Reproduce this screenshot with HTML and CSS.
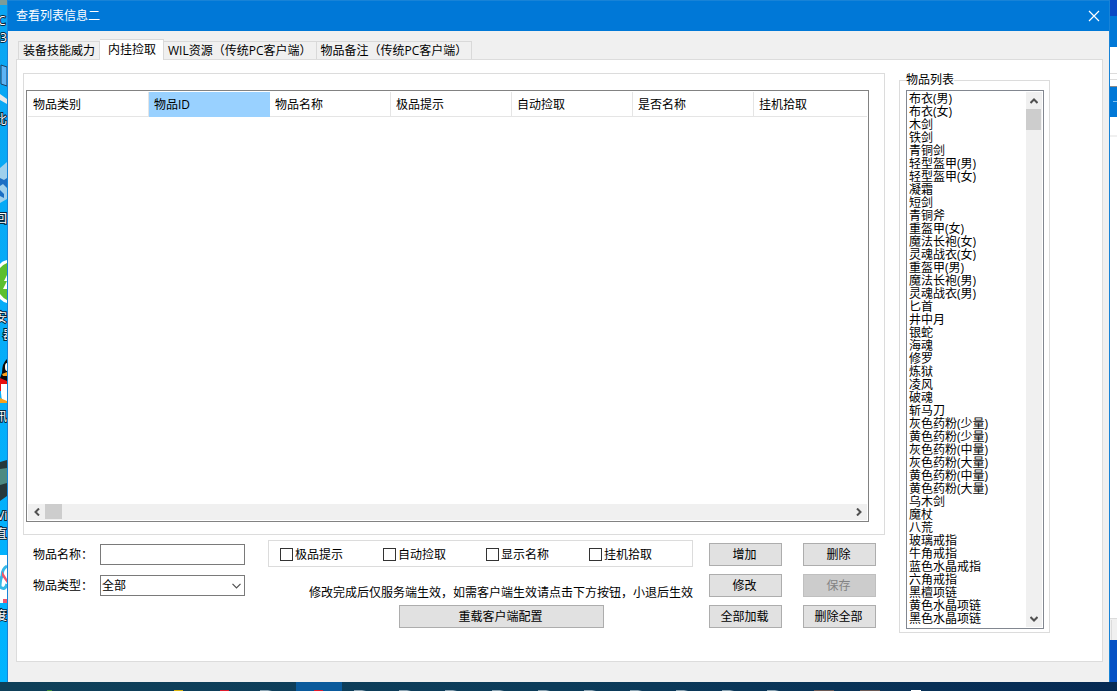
FILE: index.html
```html
<!DOCTYPE html>
<html lang="zh-CN">
<head>
<meta charset="utf-8">
<title>查看列表信息二</title>
<link rel="stylesheet" href="styles.css">
</head>
<body>
<div class="desktop">
  <svg class="strip" viewBox="0 0 7 682" preserveAspectRatio="xMinYMin slice" aria-hidden="true">
    <defs>
      <linearGradient id="sky" x1="0" y1="0" x2="0" y2="1">
        <stop offset="0" stop-color="#0aa5f2"/><stop offset="1" stop-color="#00b4ff"/>
      </linearGradient>
    </defs>
    <rect width="7" height="682" fill="url(#sky)"/>
    <path d="M0 0h7v5H0z" fill="#7d9c98"/>
    <path d="M1 65l6 2v19l-6-2z" fill="#5db4f5" stroke="#1c4468"/>
    <path d="M0 94l7 5v5l-7-4z" fill="#e8e8e8"/>
    <path d="M0 168l7-6v37l-7 4z" fill="#9fd0ec"/>
    <path d="M0 178l4 2 3-2v10l-4-4-3 2zM0 190l4 4v4l-4-2z" fill="#1c6fc4"/>
    <path d="M7 260q-5 1-7 4v35q3 3 7 4z" fill="#fff"/>
    <path d="M7 263q-5 2-7 5v26q3 4 7 6v-11H3l4-8H4l3-6z" fill="#5cbf2f"/>
    <path d="M7 359q-5 4-5 14l-2 5v10h7z" fill="#0a0a0a"/>
    <ellipse cx="7" cy="367" rx="2" ry="4" fill="#fff"/>
    <path d="M2 374l5-2v4H3z" fill="#f9a11b"/>
    <path d="M0 378l7 3v10H0z" fill="#e8100f"/>
    <path d="M1 384h6v17H3q-2-3-2-8z" fill="#fff"/>
    <path d="M0 398l7 3v2H0z" fill="#f9a11b"/>
    <path d="M0 462l7-2v36l-7 5z" fill="#26383a"/>
    <path d="M0 469l7-1v15l-7 2z" fill="#4d8a82"/>
    <rect y="555" width="7" height="48" fill="#fff"/>
    <path d="M7 566q-5 3-5 10-2 4-2 11 5 4 7-3" fill="none" stroke="#35b9e8" stroke-width="3"/>
    <path d="M2 571l5 8v4l-5-7zM3 599h4v4H3z" fill="#f0566d"/>
    <g class="strip-label">
      <text x="-2" y="25">C</text><text x="0" y="42">3</text><text x="-5" y="124">比</text>
      <text x="-5" y="223">回</text><text x="-5" y="322">安</text><text x="3" y="339">器</text>
      <text x="-5" y="421">讯</text><text x="-3" y="520">Vi</text><text x="-5" y="538">直</text>
      <text x="-5" y="620">度</text>
    </g>
  </svg>

  <div class="window">
    <header class="titlebar">
      <h1 class="title">查看列表信息二</h1>
      <button class="close" type="button" aria-label="关闭">
        <svg width="12" height="12" viewBox="0 0 12 12"><path d="M1 1l10 10M11 1L1 11" fill="none" stroke="#fff" stroke-width="1.2"/></svg>
      </button>
    </header>
    <div class="tabs" role="tablist">
      <button class="tab" type="button" role="tab">装备技能威力</button>
      <button class="tab tab-active" type="button" role="tab" aria-selected="true">内挂捡取</button>
      <button class="tab" type="button" role="tab">WIL资源（传统PC客户端）</button>
      <button class="tab" type="button" role="tab">物品备注（传统PC客户端）</button>
    </div>
    <main class="panel">
      <div class="left">
        <section class="group">
          <div class="grid-box">
            <table class="grid">
              <thead>
                <tr>
                  <th class="col">物品类别</th><th class="col col-hot">物品ID</th><th class="col">物品名称</th><th class="col">极品提示</th><th class="col">自动捡取</th><th class="col">是否名称</th><th>挂机拾取</th>
                </tr>
              </thead>
            </table>
            <div class="hscroll">
              <button class="arrow" type="button" aria-label="向左"><svg width="8" height="8" viewBox="0 0 8 8"><path d="M6 0.500L2.500 4L6 7.500" fill="none" stroke="#505050" stroke-width="2"/></svg></button>
              <span class="hthumb"></span>
              <button class="arrow" type="button" aria-label="向右"><svg width="8" height="8" viewBox="0 0 8 8"><path d="M2 0.500L5.500 4L2 7.500" fill="none" stroke="#505050" stroke-width="2"/></svg></button>
            </div>
          </div>
        </section>
        <form class="form">
          <div class="fields">
            <label for="name">物品名称：</label>
            <input class="box" id="name" type="text">
            <label for="kind">物品类型：</label>
            <div class="combo">
              <select class="box" id="kind"><option>全部</option></select>
              <svg class="chevron" width="9" height="6" viewBox="0 0 9 6"><path d="M0.500 0.800L4.500 4.800L8.500 0.800" fill="none" stroke="#505050" stroke-width="1.200"/></svg>
            </div>
          </div>
          <div class="middle">
            <div class="checks">
              <label class="check"><input type="checkbox">极品提示</label>
              <label class="check"><input type="checkbox">自动捡取</label>
              <label class="check"><input type="checkbox">显示名称</label>
              <label class="check"><input type="checkbox">挂机拾取</label>
            </div>
            <p class="note">修改完成后仅服务端生效，如需客户端生效请点击下方按钮，小退后生效</p>
            <button class="btn reload" type="button">重载客户端配置</button>
          </div>
          <div class="actions">
            <button class="btn" type="button">增加</button>
            <button class="btn" type="button">删除</button>
            <button class="btn" type="button">修改</button>
            <button class="btn" type="button" disabled>保存</button>
            <button class="btn" type="button">全部加载</button>
            <button class="btn" type="button">删除全部</button>
          </div>
        </form>
      </div>
      <fieldset class="items">
        <legend>物品列表</legend>
        <div class="listbox">
          <ul class="list" role="listbox" aria-label="物品列表">
            <li role="option">布衣(男)</li>
            <li role="option">布衣(女)</li>
            <li role="option">木剑</li>
            <li role="option">铁剑</li>
            <li role="option">青铜剑</li>
            <li role="option">轻型盔甲(男)</li>
            <li role="option">轻型盔甲(女)</li>
            <li role="option">凝霜</li>
            <li role="option">短剑</li>
            <li role="option">青铜斧</li>
            <li role="option">重盔甲(女)</li>
            <li role="option">魔法长袍(女)</li>
            <li role="option">灵魂战衣(女)</li>
            <li role="option">重盔甲(男)</li>
            <li role="option">魔法长袍(男)</li>
            <li role="option">灵魂战衣(男)</li>
            <li role="option">匕首</li>
            <li role="option">井中月</li>
            <li role="option">银蛇</li>
            <li role="option">海魂</li>
            <li role="option">修罗</li>
            <li role="option">炼狱</li>
            <li role="option">凌风</li>
            <li role="option">破魂</li>
            <li role="option">斩马刀</li>
            <li role="option">灰色药粉(少量)</li>
            <li role="option">黄色药粉(少量)</li>
            <li role="option">灰色药粉(中量)</li>
            <li role="option">灰色药粉(大量)</li>
            <li role="option">黄色药粉(中量)</li>
            <li role="option">黄色药粉(大量)</li>
            <li role="option">乌木剑</li>
            <li role="option">魔杖</li>
            <li role="option">八荒</li>
            <li role="option">玻璃戒指</li>
            <li role="option">牛角戒指</li>
            <li role="option">蓝色水晶戒指</li>
            <li role="option">六角戒指</li>
            <li role="option">黑檀项链</li>
            <li role="option">黄色水晶项链</li>
            <li role="option">黑色水晶项链</li>
          </ul>
          <div class="vscroll">
            <button class="arrow" type="button" aria-label="向上"><svg width="8" height="8" viewBox="0 0 8 8"><path d="M0.500 6L4 2.500L7.500 6" fill="none" stroke="#505050" stroke-width="2"/></svg></button>
            <span class="vthumb"></span>
            <button class="arrow" type="button" aria-label="向下"><svg width="8" height="8" viewBox="0 0 8 8"><path d="M0.500 2L4 5.500L7.500 2" fill="none" stroke="#505050" stroke-width="2"/></svg></button>
          </div>
        </div>
      </fieldset>
    </main>
  </div>

  <svg class="strip" viewBox="0 0 7 682" preserveAspectRatio="xMinYMin slice" aria-hidden="true">
    <rect width="7" height="682" fill="#fff"/>
    <rect width="7" height="16" fill="#0a4ac4"/>
    <rect y="16" width="7" height="31" fill="#0078d7"/>
    <path d="M0 73.500h7M0 79.500h7" stroke="#dcdcdc"/>
    <rect y="86" width="7" height="31" fill="#0078d7"/>
    <path d="M0 86.500h7" stroke="#8a8a8a"/>
    <path d="M3 101.500h4" stroke="#7cc0f2"/>
    <path d="M0 136h7" stroke="#f0f0f0" stroke-width="2"/>
    <rect y="618" width="7" height="22" fill="#f0f0f0"/>
    <path d="M0 618.500h7M1.500 620v20" stroke="#dcdcdc"/>
    <rect y="640" width="7" height="42" fill="#0550c4"/>
  </svg>
</div>
<footer class="taskbar">
  <svg width="1117" height="9" viewBox="0 0 1117 9" aria-hidden="true">
    <rect x="296" width="46" height="9" fill="#0a5a9c"/>
    <g fill="#8aa3b2">
      <path d="M260 8h12l-4 1h-8zM354 8h12l-4 1h-8zM399 8h12l-4 1h-8zM445 8h12l-4 1h-8zM492 8h12l-4 1h-8zM538 8h12l-4 1h-8zM584 8h12l-4 1h-8zM630 8h12l-4 1h-8zM676 8h12l-4 1h-8zM722 8h12l-4 1h-8zM767 8h12l-4 1h-8z"/>
    </g>
    <path d="M47 8h5v1h-5z" fill="#3f8c3a"/>
    <path d="M174 8h9v1h-9z" fill="#d9b310"/>
    <path d="M220 8h9v1h-9zM314 8h9v1h-9z" fill="#e01b2c"/>
    <path d="M814 8h20v1h-20zM860 8h20v1h-20z" fill="#6d5a55"/>
    <path d="M911 8h10v1h-10z" fill="#fff"/>
  </svg>
</footer>
</body>
</html>
```
FILE: styles.css
```css
* {
  box-sizing: border-box;
}

body {
  margin: 0;
  min-height: 100vh;
  display: flex;
  flex-direction: column;
  font: 12px/16px "Open Sans", "Noto Sans CJK SC", sans-serif;
  color: #000;
  background: #fff;
}

button,
input,
select {
  font: inherit;
  color: inherit;
  margin: 0;
  padding: 0;
  border: 0;
  border-radius: 0;
  background: none;
}

.desktop {
  flex: 1;
  display: grid;
  grid-template-columns: 7px minmax(0, 1fr) 7px;
}

.strip {
  width: 7px;
  height: 100%;
  display: block;
}

.strip-label {
  font-size: 12px;
  fill: #fff;
  stroke: #06263c;
  stroke-width: 2px;
  paint-order: stroke;
}

.window {
  display: flex;
  flex-direction: column;
  background: #f0f0f0;
  border: solid #1883d7;
  border-width: 0 1px;
}

.titlebar {
  height: 31px;
  display: flex;
  align-items: center;
  justify-content: space-between;
  padding-left: 8px;
  background: #0078d7;
  border-top: 1px solid #1883d7;
  color: #fff;
}

.title {
  margin: 0;
  font: inherit;
}

.close {
  display: grid;
  place-items: center;
  width: 30px;
  height: 29px;
}

.tabs {
  display: flex;
  align-items: flex-end;
  padding: 8px 10px 0;
}

.tab {
  height: 18px;
  padding: 0 4px;
  border: 1px solid #d9d9d9;
  border-bottom: 0;
  line-height: 18px;
  white-space: nowrap;
}

.tab + .tab {
  border-left: 0;
}

.tab-active {
  height: 21px;
  padding: 0 7px 0 8px;
  margin-bottom: -1px;
  background: #fff;
  z-index: 1;
  line-height: 20px;
}

.panel {
  flex: 1;
  display: flex;
  gap: 14px;
  margin: 0 6px 20px 8px;
  padding: 13px 52px 28px 6px;
  background: #fff;
  border: 1px solid #dcdcdc;
}

.left {
  flex: 1;
  min-width: 0;
  display: flex;
  flex-direction: column;
}

.group {
  flex: 1;
  display: flex;
  padding: 16px 15px 12px 2px;
  border: 1px solid #dcdcdc;
}

.grid-box {
  flex: 1;
  display: flex;
  flex-direction: column;
  justify-content: space-between;
  padding: 1px;
  border: 1px solid #828282;
}

.grid {
  width: 100%;
  table-layout: fixed;
  border-collapse: separate;
  border-spacing: 0;
}

.grid th {
  height: 25px;
  padding: 1px 0 0 5px;
  border-bottom: 1px solid #e5e5e5;
  font-weight: normal;
  text-align: left;
}

.grid .col {
  width: 121px;
  border-right: 1px solid #e5e5e5;
}

.grid .col-hot {
  background: #99d1ff;
  border-color: #99d1ff;
}

.hscroll {
  height: 16px;
  display: flex;
  background: #f0f0f0;
}

.hscroll .arrow:last-child {
  margin-left: auto;
}

.arrow {
  display: grid;
  place-items: center;
  width: 17px;
  height: 16px;
}

.hthumb {
  width: 17px;
  height: 15px;
  background: #cdcdcd;
}

.form {
  display: flex;
  align-items: flex-start;
  padding: 5px 9px 5px 10px;
}

.fields {
  display: grid;
  grid-template-columns: 67px 145px;
  gap: 10px 0;
  align-items: center;
  padding-top: 4px;
}

.box {
  display: block;
  width: 100%;
  height: 21px;
  padding: 0 2px;
  border: 1px solid #7a7a7a;
  background: #fff;
}

select.box {
  padding: 0 1px;
  appearance: none;
}

.combo {
  position: relative;
}

.chevron {
  position: absolute;
  right: 4px;
  top: 8px;
  pointer-events: none;
}

.middle {
  flex: 1;
  display: flex;
  flex-direction: column;
  margin: 0 16px 0 23px;
}

.checks {
  display: grid;
  grid-template-columns: repeat(4, 103px);
  height: 27px;
  padding: 2px 0 0 11px;
  border: 1px solid #dcdcdc;
  align-items: center;
}

.check {
  display: flex;
  align-items: center;
  gap: 2px;
}

.check input {
  appearance: none;
  width: 13px;
  height: 13px;
  border: 1px solid #333;
  background: #fff;
}

.note {
  margin: 18px 0 4px;
  text-align: right;
  white-space: nowrap;
}

.btn {
  height: 23px;
  padding: 1px 2px 0 0;
  border: 1px solid #adadad;
  background: #e1e1e1;
}

.btn:disabled {
  color: #838383;
  background: #ccc;
  border-color: #bfbfbf;
}

.reload {
  width: 205px;
  margin-left: 131px;
}

.actions {
  display: grid;
  grid-template-columns: 73px 73px;
  gap: 8px 21px;
  padding-top: 3px;
}

.items {
  width: 151px;
  min-width: 0;
  margin: 0;
  padding: 3px 5px 3px 6px;
  border: 1px solid #dcdcdc;
}

.items legend {
  padding: 0;
  line-height: 14px;
}

.listbox {
  display: flex;
  justify-content: space-between;
  height: 100%;
  padding: 1px;
  border: 1px solid #828790;
}

.list {
  margin: 0;
  padding: 0 0 2px 1px;
  list-style: none;
  line-height: 13px;
}

.list li {
  height: 13px;
  white-space: nowrap;
}

.vscroll {
  display: flex;
  flex-direction: column;
  width: 16px;
  background: #f0f0f0;
}

.vscroll .arrow {
  width: 16px;
  height: 17px;
}

.vscroll .arrow:last-child {
  margin-top: auto;
}

.vthumb {
  width: 15px;
  height: 21px;
  background: #cdcdcd;
}

.taskbar {
  height: 9px;
  overflow: hidden;
  background: linear-gradient(90deg, #0f4059, #0c3c5a 50%, #062a54);
}

.taskbar svg {
  display: block;
}
```
